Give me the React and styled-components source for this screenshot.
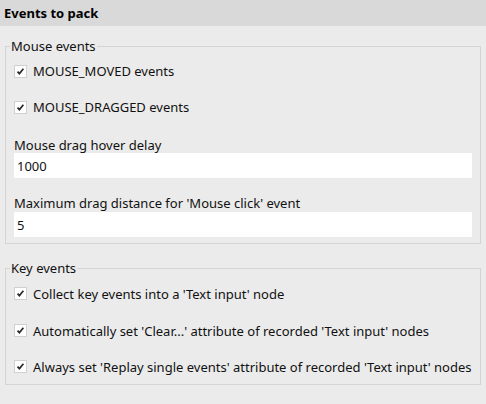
import React from "react";
import styled, { createGlobalStyle } from "styled-components";

const Global = createGlobalStyle`
  html, body { margin: 0; padding: 0; background: #ebebeb; }
  body { font-family: "Noto Sans", "Open Sans", sans-serif; font-size: 13px; color: #111; }
`;

const Page = styled.div`
  width: 486px;
  height: 404px;
  background: #ebebeb;
  display: flex;
  flex-direction: column;
`;

const Header = styled.div`
  height: 26px;
  background: #d9d9d9;
  display: flex;
  align-items: center;
  padding-left: 4px;
  font-weight: bold;
  font-size: 13px;
  color: #000;
`;

const Body = styled.div`
  padding: 13px 5px 0 5px;
  display: flex;
  flex-direction: column;
  gap: 17px;
`;

const Group = styled.fieldset`
  margin: 0;
  border: 1px solid #d4d4d4;
  padding: 0 0 ${(p) => p.$pb}px 0;
  display: flex;
  flex-direction: column;
  min-width: 0;
`;

const Legend = styled.legend`
  padding: 0 1px;
  margin-left: 4px;
  line-height: 14px;
`;

const CheckRow = styled.label`
  display: flex;
  align-items: center;
  gap: 6px;
  height: ${(p) => p.$h}px;
  padding-left: 8px;
`;

const Box = styled.span`
  flex: none;
  width: 11px;
  height: 11px;
  border: 1px solid #d0d0d0;
  background: #fff;
  display: flex;
  align-items: center;
  justify-content: center;
`;

const FieldLabel = styled.div`
  padding-left: 8px;
  line-height: 16px;
  margin-top: ${(p) => p.$mt}px;
`;

const Input = styled.div`
  margin: ${(p) => p.$mt}px 8px 0 8px;
  height: 25px;
  background: #fff;
  display: flex;
  align-items: center;
  padding-left: 3px;
`;

const Check = () => (
  <Box>
    <svg width="9" height="9" viewBox="0 0 9 9">
      <path d="M1.5 4.6 L3.4 6.6 L7.4 1.8" fill="none" stroke="#2a2a2a" strokeWidth="1.7" />
    </svg>
  </Box>
);

const CheckItem = ({ children, h = 36 }) => (
  <CheckRow $h={h}>
    <Check />
    <span>{children}</span>
  </CheckRow>
);

export default function App() {
  return (
    <Page>
      <Global />
      <Header>Events to pack</Header>
      <Body>
        <Group $pb={6}>
          <Legend>Mouse events</Legend>
          <CheckItem>MOUSE_MOVED events</CheckItem>
          <CheckItem>MOUSE_DRAGGED events</CheckItem>
          <FieldLabel $mt={12}>Mouse drag hover delay</FieldLabel>
          <Input $mt={0}>1000</Input>
          <FieldLabel $mt={17}>Maximum drag distance for 'Mouse click' event</FieldLabel>
          <Input $mt={1}>5</Input>
        </Group>
        <Group $pb={0}>
          <Legend>Key events</Legend>
          <CheckItem h={37}>Collect key events into a 'Text input' node</CheckItem>
          <CheckItem h={37}>Automatically set 'Clear...' attribute of recorded 'Text input' nodes</CheckItem>
          <CheckItem h={35}>Always set 'Replay single events' attribute of recorded 'Text input' nodes</CheckItem>
        </Group>
      </Body>
    </Page>
  );
}
